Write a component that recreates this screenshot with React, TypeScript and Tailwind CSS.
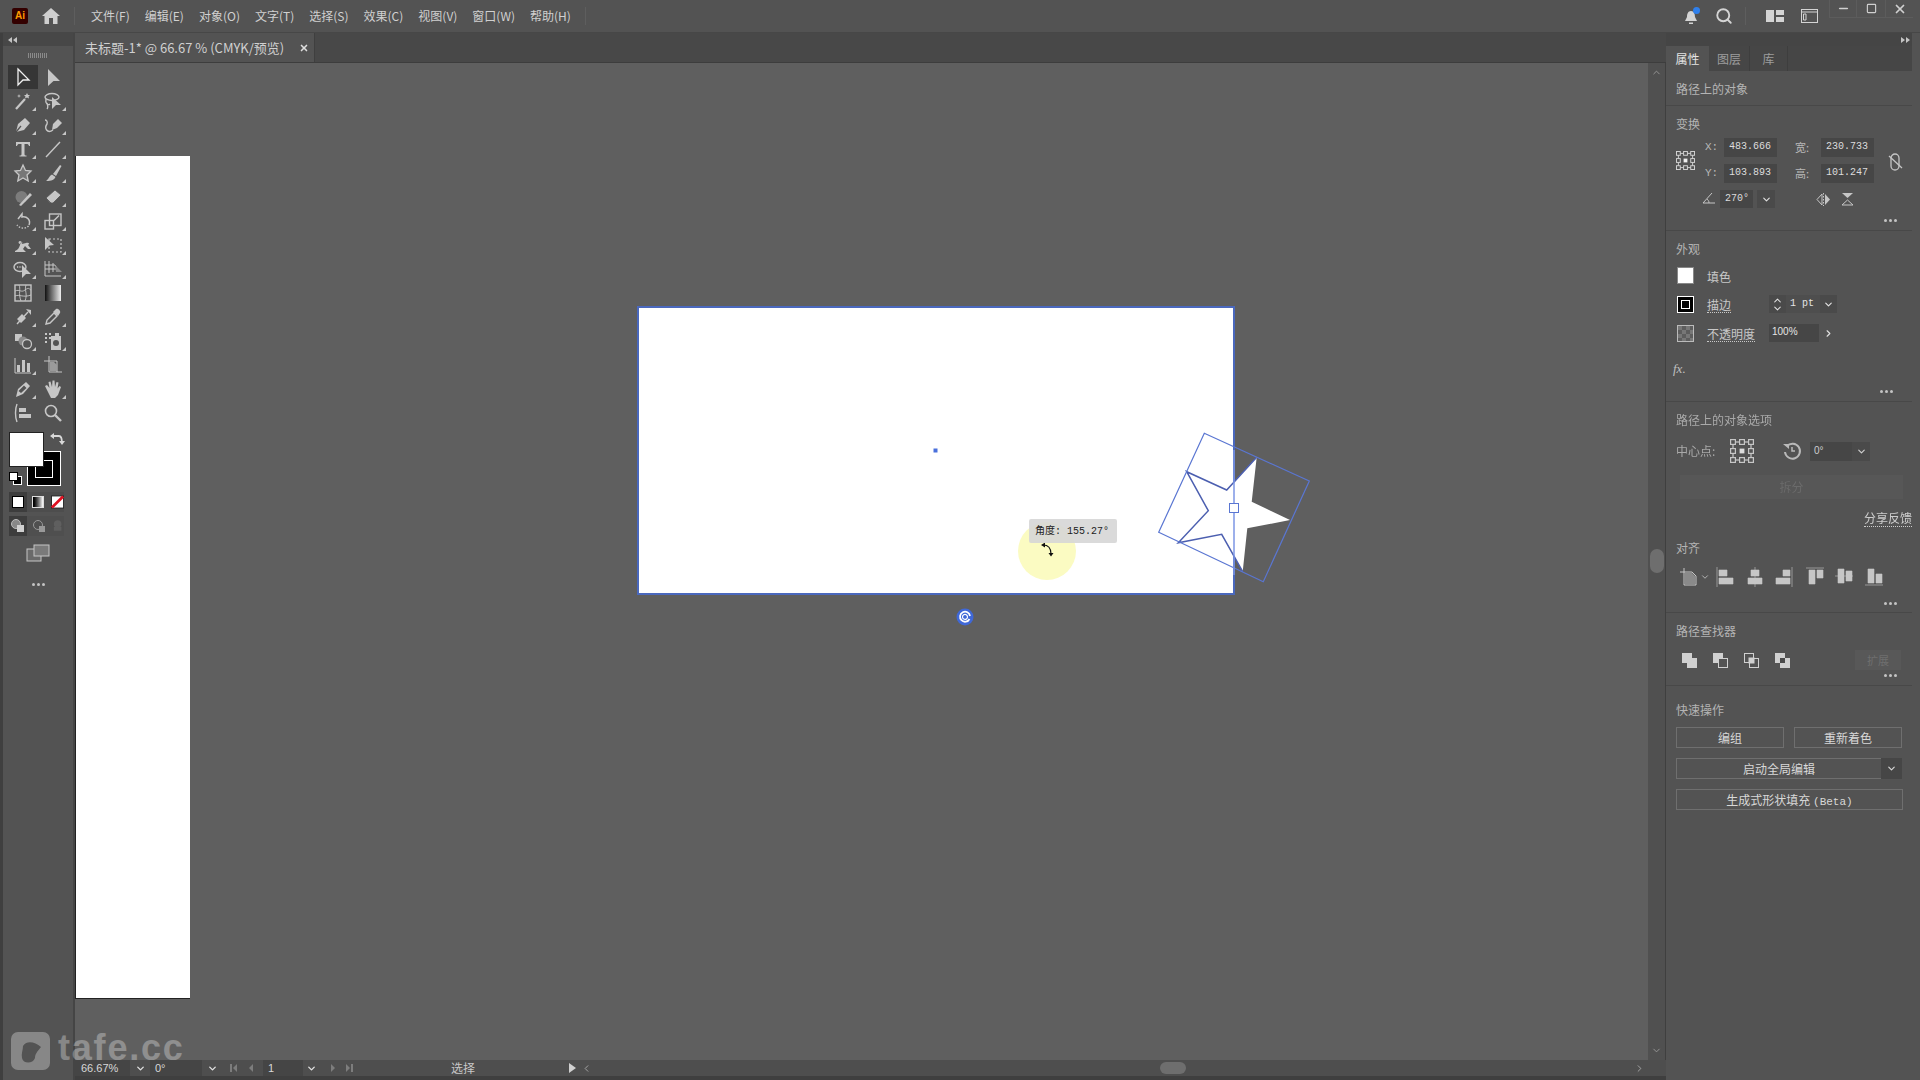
import { ReactNode } from 'react'
import { ChevronDown, ChevronRight, ChevronUp, ChevronLeft, Search, Minus, Square, X } from 'lucide-react'

const MENUS = ['文件(F)', '编辑(E)', '对象(O)', '文字(T)', '选择(S)', '效果(C)', '视图(V)', '窗口(W)', '帮助(H)']
const mono = "font-['Liberation_Mono','Noto_Sans_CJK_SC',monospace]"

// Tool icon, 20x20 grid; the small corner triangle marks a flyout
function Tool({ children, corner = true, active = false }: { children: ReactNode; corner?: boolean; active?: boolean }) {
  return (
    <div className={`relative w-[30px] h-[24px] flex items-center justify-center ${active ? 'bg-[#363636]' : ''}`}>
      <svg width="20" height="20" viewBox="0 0 20 20" fill="#c6c6c6" stroke="#c6c6c6" strokeWidth="0">
        {children}
      </svg>
      {corner && <span className="absolute right-[2px] bottom-[2px] w-0 h-0 border-l-[4px] border-l-transparent border-b-[4px] border-b-[#c6c6c6]" />}
    </div>
  )
}

const line = { fill: 'none', strokeWidth: 1.4 }

const TOOLS: { icon: ReactNode; corner?: boolean; active?: boolean }[] = [
  { icon: <path d="M5 2 L16 13 L10 13 L5 18 Z" fill="none" stroke="#f0f0f0" strokeWidth="1.3" />, corner: false, active: true },
  { icon: <path d="M5 2 L17 14 L10.500 14 L5 19 Z" />, corner: false },
  { icon: <><path d="M3 18 L12 8" {...line} strokeWidth={2.2} /><path d="M14 2 l1 2 2 0 -1.500 1.500 .5 2 -2 -1 -2 1 .5 -2 -1.500 -1.500 2 0z M6 3 l.5 1.500 1.500 .5 -1.500 .5 -.5 1.500 -.5 -1.500 -1.500 -.5 1.500 -.5z" /></> },
  { icon: <><ellipse cx="9" cy="6" rx="7" ry="3.500" {...line} /><path d="M3 8 C2 12 5 15 7 13 M4 12 c1 3 1 5 0 6" {...line} /><path d="M9 6 L18 14 L13 14 L9 18 Z" /></> },
  { icon: <><path d="M3 17 L5 9 L12 3 L17 8 L11 15 Z" /><path d="M3 17 L8 11" stroke="#535353" strokeWidth="1.200" /></> },
  { icon: <><path d="M9 15 L10 9 L15 4 L19 8 L14 13 Z" /><path d="M10 15 C4 19 1 13 4 9 C5 6 3 5 2 5" {...line} /></> },
  { icon: <path d="M3 3 H17 V7 H16 C15.500 5.500 15 5 13.500 5 H11.500 V15 C11.500 16 12 16.500 13.500 16.500 V17.500 H6.500 V16.500 C8 16.500 8.500 16 8.500 15 V5 H6.500 C5 5 4.500 5.500 4 7 H3 Z" />, },
  { icon: <path d="M3 18 L17 3" {...line} /> },
  { icon: <path d="M10 2 L12.500 7.500 L18 8 L14 12 L15.200 18 L10 15 L4.800 18 L6 12 L2 8 L7.500 7.500 Z" fill="#777" stroke="#c6c6c6" strokeWidth="1.300" /> },
  { icon: <><path d="M10 11 L17 2 L18.500 3 L13 13 Z" /><path d="M9 11.500 L12.500 14 C11 18 6 18 3 18 C6 16 6 13 9 11.500Z" /></> },
  { icon: <><circle cx="8.500" cy="10" r="6" fill="#7c7c7c" stroke="#c6c6c6" /><path d="M6 18 L17 6 L19 8 L8 19 Z" /></> },
  { icon: <path d="M3 11 L12 3 L18 8 L10 16 H7 Z M3 11 L8 16" fill="#c6c6c6" stroke="#535353" strokeWidth=".8" /> },
  { icon: <><path d="M5 8 L9 3 V6 C14 5 18 9 16 14" {...line} strokeWidth={1.500} /><path d="M15.500 15 C13 18 7 18 4 14" fill="none" strokeWidth="1.400" strokeDasharray="1.500 1.500" /></> },
  { icon: <><rect x="2" y="9.500" width="8.500" height="8.500" {...line} /><rect x="6.500" y="3" width="11.500" height="11.500" {...line} /><path d="M11 9.500 L16 4.500" {...line} /></> },
  { icon: <path d="M2 16 C5 15 6 13 7 10 C8 6 10 6 9 9 L13 8 C16 7 17 9 15 10 L18 14 L15 14 L12 11 L10 14 L13 17 H2Z M7 6 a1.500 1.500 0 1 0 .1 0" /> },
  { icon: <><path d="M2 2 L11 10 L6.500 10.500 L2 15Z" /><rect x="6" y="4" width="12" height="13" fill="none" strokeWidth="1.200" strokeDasharray="2 2" /></> },
  { icon: <><ellipse cx="7" cy="8" rx="6" ry="4.500" {...line} /><path d="M4 8h6" {...line} strokeDasharray="1.200 1.200" /><path d="M9 6 L18 15 L13 15 L9 19Z" /></> },
  { icon: <><path d="M2 2 V17 H18 M2 6 H12 L16 13 M2 10 H14 M6 2 V14 M10 4 V13" {...line} strokeWidth={1} /><path d="M12 6 L19 13 H13 Z" fill="#8a8a8a" /></> },
  { icon: <><rect x="2" y="2" width="16" height="16" {...line} /><path d="M2 8 C7 6 8 10 12 7 S16 6 18 7 M6 2 C8 6 5 10 8 18 M13 2 C11 8 15 10 12 18 M2 13 C7 11 10 15 18 12" {...line} strokeWidth={.9} /></>, corner: false },
  { icon: <><defs><linearGradient id="grad" x1="0" x2="1"><stop offset="0" stopColor="#111" /><stop offset="1" stopColor="#eee" /></linearGradient></defs><rect x="2" y="2" width="16" height="16" fill="url(#grad)" stroke="#c6c6c6" /></>, corner: false },
  { icon: <><path d="M4 17 L15 5" {...line} /><path d="M4 12 l5 -5 4 4 -5 5z M13 2 l5 1 0 5z" /></> },
  { icon: <><path d="M3 17 L4 13 L11 6 L14 9 L7 16 Z" {...line} /><path d="M10 5 L13 2 C15 1 18 4 17 6 L15 9 Z" /></> },
  { icon: <><rect x="2" y="3" width="7" height="7" /><circle cx="10" cy="10" r="4.500" fill="#8a8a8a" /><circle cx="14" cy="13" r="4.500" fill="#535353" stroke="#c6c6c6" strokeWidth="1.300" /></> },
  { icon: <><path d="M2 2h2v2H2zM6 2h2v2H6zM2 6h2v2H2zM6 6h2v2H6zM2 10h2v2H2z" /><path d="M12 2h4v3h2v14H8V5h4z" /><circle cx="13" cy="12" r="3" fill="#535353" stroke="#c6c6c6" /></> },
  { icon: <><path d="M2 3 V18 H18" {...line} strokeWidth={1} /><path d="M4 10h3v7H4zM9 5h3v12H9zM14 8h3v9h-3z" /></> },
  { icon: <><path d="M6 1 V17 H19 M1 6 H14 V17" {...line} strokeWidth={1} /><path d="M7 7 H11 L14 10 V16 H7Z" fill="#9a9a9a" /></>, corner: false },
  { icon: <path d="M3 18 L5 10 L13 3 L17 7 L10 15 Z M5.500 12 L11 6.500 L13.500 9 L8 14 Z" fillRule="evenodd" /> },
  { icon: <path d="M4 11 L2 7 L4 6 L6.500 9 L5.500 3 L7.500 2.500 L9 8 L9.500 1.500 H11.500 L12 8 L13.500 3 L15.500 3.500 L14.500 9.500 L16.500 7 L18 8 L15 16 L12 19 H8 Z" /> },
  { icon: <><path d="M4 1 C2 6 2 14 4 19" {...line} /><path d="M6 5h7v4H6zM6 11h12v4H6z" /></>, corner: false },
  { icon: <><circle cx="8" cy="8" r="5.500" {...line} strokeWidth={1.600} /><path d="M12 12 L18 18" {...line} strokeWidth={2.400} /></>, corner: false },
]

function Dots({ className = '' }: { className?: string }) {
  return (
    <div className={`flex gap-[2px] ${className}`}>
      <span className="w-[3px] h-[3px] rounded-full bg-[#c4c4c4]" />
      <span className="w-[3px] h-[3px] rounded-full bg-[#c4c4c4]" />
      <span className="w-[3px] h-[3px] rounded-full bg-[#c4c4c4]" />
    </div>
  )
}

// Double arrow on the collapse strips
function Collapse({ flip = false }: { flip?: boolean }) {
  return (
    <svg width="9" height="6" viewBox="0 0 9 6" fill="#c4c4c4">
      {flip ? <path d="M0 0 L4 3 L0 6Z M5 0 L9 3 L5 6Z" /> : <path d="M4 0 L0 3 L4 6Z M9 0 L5 3 L9 6Z" />}
    </svg>
  )
}

function Toolbar() {
  return (
    <aside className="w-[75px] shrink-0 flex flex-col border-l-[3px] border-l-[#3f3f3f] border-r-2 border-r-[#454545]">
      <div className="h-[13px] bg-[#474747] flex items-center pl-[5px]">
        <Collapse />
      </div>
      <div className="h-[19px] flex items-center justify-center">
        <div className="w-[20px] h-[5px] bg-[repeating-linear-gradient(90deg,#8a8a8a_0,#8a8a8a_1px,transparent_1px,transparent_2px)]" />
      </div>
      <div className="grid grid-cols-[30px_30px] pl-[5px]">
        {TOOLS.map((t, i) => (
          <Tool key={i} corner={t.corner} active={t.active}>{t.icon}</Tool>
        ))}
      </div>

      {/* fill and stroke */}
      <div className="relative h-[70px] mt-[0px]">
        <div className="absolute left-[24px] top-[26px] w-[34px] h-[35px] bg-black border border-white flex items-center justify-center">
          <div className="w-[18px] h-[18px] border border-white" />
        </div>
        <div className="absolute left-[6px] top-[7px] w-[35px] h-[35px] bg-white border border-[#222]" />
        <svg className="absolute left-[46px] top-[6px]" width="16" height="16" viewBox="0 0 16 16" fill="none" stroke="#d8d8d8" strokeWidth="1.800">
          <path d="M3 5 H10 C12 5 13 7 13 12" />
          <path d="M1 5 L5 2 V8 Z M10 10 H16 L13 14 Z" fill="#d8d8d8" stroke="none" />
        </svg>
        <div className="absolute left-[6px] top-[47px] w-[9px] h-[9px] bg-white border border-black z-10" />
        <div className="absolute left-[10px] top-[51px] w-[9px] h-[9px] bg-black border border-white" />
      </div>

      <div className="flex items-center h-[20px] mt-[-3px] ml-[6px] mr-[9px] bg-[#4d4d4d]">
        <div className="w-[19px] h-[20px] bg-[#3d3d3d] flex items-center justify-center"><span className="w-[12px] h-[12px] bg-white border border-black" /></div>
        <div className="w-[25px] flex justify-center"><span className="w-[12px] h-[12px] bg-gradient-to-r from-black to-white border border-[#ddd]" /></div>
        <svg width="14" height="14" viewBox="0 0 14 14" className="ml-[1px]">
          <rect x=".5" y=".5" width="13" height="13" fill="#fff" stroke="#222" />
          <path d="M1 13 L13 1" stroke="#e01020" strokeWidth="3" />
        </svg>
      </div>

      <div className="flex items-center h-[20px] mt-[4px] ml-[6px] mr-[9px] bg-[#4f4f4f]">
        <div className="w-[19px] h-[20px] bg-[#3d3d3d] flex items-center justify-center">
          <svg width="14" height="14" viewBox="0 0 14 14"><circle cx="5" cy="5" r="4.500" fill="#888" stroke="#bbb" /><rect x="6" y="6" width="7" height="7" fill="#d0d0d0" /></svg>
        </div>
        <div className="w-[25px] flex justify-center">
          <svg width="14" height="14" viewBox="0 0 14 14"><circle cx="6" cy="6" r="4.500" fill="none" stroke="#999" /><rect x="7" y="7" width="6" height="6" fill="#999" /></svg>
        </div>
        <svg width="14" height="14" viewBox="0 0 14 14" className="opacity-40"><circle cx="7" cy="5" r="4" fill="#777" /><rect x="3" y="8" width="8" height="4" fill="#777" /></svg>
      </div>

      <div className="flex justify-center mt-[8px]">
        <svg width="24" height="18" viewBox="0 0 24 18">
          <rect x="1" y="5" width="14" height="12" fill="#6a6a6a" stroke="#c6c6c6" />
          <rect x="8" y="1" width="15" height="11" fill="#7a7a7a" stroke="#c6c6c6" />
        </svg>
      </div>
      <div className="flex justify-center mt-[21px]"><Dots /></div>
    </aside>
  )
}

// Coordinates are the screen's; the viewBox starts where the canvas does
function StarOverlay() {
  return (
    <svg className="absolute left-0 top-0 pointer-events-none" width="1573" height="997" viewBox="75 63 1573 997">
      <circle cx="1047" cy="551" r="29" fill="#fbfbc2" />
      <path d="M1186.700 471.700 L1226.700 490 L1256.700 457.300 L1251.700 501.700 L1290 520 L1247.300 528.300 L1242.700 571.700 L1221.700 534.300 L1178.300 542.700 L1208.300 510.700 Z" fill="#fff" />
      <path d="M1256.700 457.300 L1226.700 490 L1186.700 471.700 L1208.300 510.700 L1178.300 542.700 L1221.700 534.300 L1242.700 571.700" fill="none" stroke="#4c5fb0" strokeWidth="1.500" />
      <path d="M1204.300 433.300 L1309.300 481 L1263.300 581.700 L1158.700 532.300 Z" fill="none" stroke="#5a76d2" strokeWidth="1.200" />
      <path d="M1234 450 V575" stroke="#7d96e4" strokeWidth="1.500" />
      <rect x="1229.500" y="503.500" width="9" height="9" fill="#fff" stroke="#5a76d2" />
      <path d="M1043 545 C1049 545 1051 548 1051 554" fill="none" stroke="#111" strokeWidth="1.200" />
      <path d="M1041 545 L1045 542.500 V547.500 Z M1048.500 553 H1053.500 L1051 556.500 Z" fill="#111" />
      <rect x="933.500" y="448.500" width="4" height="4" fill="#4a70dc" />
      <circle cx="965" cy="617" r="8.500" fill="#3f68d8" />
      <path d="M969.500 619 A5 5 0 1 1 970 616" fill="none" stroke="#fff" strokeWidth="1.800" />
      <path d="M967.500 617 A2.500 2.500 0 1 1 967.500 616.900" fill="none" stroke="#fff" strokeWidth="1.200" />
    </svg>
  )
}

function Canvas() {
  return (
    <div className="relative flex-1 bg-[#5f5f5f] overflow-hidden">
      <div className="absolute left-0 top-[93px] w-[115px] h-[843px] bg-white border-l border-b border-[#222]" />
      <div className="absolute left-[562px] top-[243px] w-[598px] h-[289px] bg-white border-2 border-[#4a68bd]" />
      <StarOverlay />
      <div className={`absolute left-[954px] top-[456px] w-[88px] h-[24px] rounded-[2px] bg-[#d6d6d6]/90 flex items-center pl-[6px] text-[10px] text-[#222] ${mono}`}>
        角度: 155.27°
      </div>
    </div>
  )
}

function StatusDrop({ className = '' }: { className?: string }) {
  return <ChevronDown size={11} strokeWidth={3} className={`text-[#e0e0e0] shrink-0 ${className}`} />
}

function NavIcon({ d }: { d: string }) {
  return <svg width="12" height="10" viewBox="0 0 12 10" fill="#7d7d7d"><path d={d} /></svg>
}

function StatusBar() {
  return (
    <div className="h-[16px] shrink-0 flex items-center bg-[#4e4e4e] text-[#d8d8d8] text-[11px] leading-none">
      <div className="w-[55px] h-full bg-[#454545] pl-[6px] flex items-center font-['Liberation_Sans',sans-serif]">66.67%</div>
      <div className="w-[20px] flex justify-center"><StatusDrop /></div>
      <div className="w-[52px] h-full bg-[#454545] pl-[5px] flex items-center font-['Liberation_Sans',sans-serif]">0°</div>
      <div className="w-[20px] flex justify-center"><StatusDrop /></div>
      <div className="flex items-center gap-[6px] pl-[5px] w-[41px]">
        <NavIcon d="M3 1h2v8H3z M10 1v8L6 5z" />
        <NavIcon d="M8 1v8L4 5z" />
      </div>
      <div className="w-[40px] h-full bg-[#454545] pl-[5px] flex items-center font-['Liberation_Sans',sans-serif]">1</div>
      <div className="w-[16px] flex justify-center"><StatusDrop /></div>
      <div className="flex items-center gap-[5px] pl-[8px] w-[48px]">
        <NavIcon d="M4 1v8l4-4z" />
        <NavIcon d="M2 1v8l4-4z M7 1h2v8H7z" />
      </div>
      <div className="w-[192px] text-center text-[12px] text-[#c8c8c8]">选择</div>
      <svg className="ml-[8px] w-[14px] shrink-0" width="14" height="10" viewBox="0 0 14 10" fill="#d0d0d0"><path d="M2 0 L9 5 L2 10Z" /></svg>
      <ChevronLeft size={11} className="text-[#aaa] shrink-0" />
      <div className="flex-1 relative h-full">
        <div className="absolute left-[568px] top-[2px] w-[26px] h-[12px] rounded-full bg-[#6e6e6e]" />
      </div>
      <ChevronRight size={11} className="text-[#aaa] shrink-0 mr-[21px]" />
    </div>
  )
}

function Label({ children, underline = false }: { children: ReactNode; underline?: boolean }) {
  return <span className={`inline-block text-[12px] leading-[15px] text-[#c8c8c8] ${underline ? 'border-b border-dotted border-[#c8c8c8]' : ''}`}>{children}</span>
}

function Title({ children }: { children: ReactNode }) {
  return <div className="text-[12px] leading-[18px] text-[#b4b4b4] pl-[10px]">{children}</div>
}

function Field({ value, className = '' }: { value: string; className?: string }) {
  return <div className={`h-[19px] bg-[#464646] text-[#dcdcdc] text-[10px] leading-[17px] pl-[5px] ${mono} ${className}`}>{value}</div>
}

function RefPoint({ size = 19 }: { size?: number }) {
  const pts = [2.500, 10, 17.500]
  return (
    <svg width={size} height={size} viewBox="0 0 20 20" fill="#535353" stroke="#d4d4d4" strokeWidth="1">
      <rect x="2.500" y="2.500" width="15" height="15" fill="none" />
      {pts.map(y => pts.map(x => (
        x === 10 && y === 10
          ? <rect key={`${x}${y}`} x={x - 2} y={y - 2} width="4" height="4" fill="#eee" stroke="none" />
          : <rect key={`${x}${y}`} x={x - 2} y={y - 2} width="4" height="4" />
      )))}
    </svg>
  )
}

const alignIcons = [
  'M1 1 V21 M3 4 H11 V10 H3 Z M3 12 H17 V18 H3 Z',
  'M9 1 V21 M5 4 H13 V10 H5 Z M2 12 H16 V18 H2 Z',
  'M17 1 V21 M8 4 H15 V10 H8 Z M1 12 H15 V18 H1 Z',
  'M1 2 H19 M4 4 H10 V18 H4 Z M12 4 H18 V12 H12 Z',
  'M1 10 H19 M4 3 H10 V17 H4 Z M12 5 H18 V15 H12 Z',
  'M1 19 H19 M4 3 H10 V17 H4 Z M12 8 H18 V17 H12 Z',
]

function AlignRow() {
  return (
    <div className="flex items-center h-[22px] mt-[9px] pl-[14px]">
      <svg width="20" height="18" viewBox="0 0 20 18" fill="none" stroke="#c6c6c6">
        <path d="M4 0 V4 M0 4 H12 L16 8 V17 H4 V4" />
        <path d="M5 5 H12 L15 8 V16 H5Z" fill="#8a8a8a" stroke="none" />
      </svg>
      <ChevronDown size={10} className="text-[#c6c6c6]" />
      <div className="flex gap-[9.500px] ml-[6px]">
        {alignIcons.map((d, i) => (
          <svg key={i} width="20" height="22" viewBox="0 0 20 22">
            <path d={d} fill="#c6c6c6" stroke="#c6c6c6" strokeWidth=".6" />
          </svg>
        ))}
      </div>
    </div>
  )
}

function PathfinderRow() {
  return (
    <div className="flex items-center h-[20px] mt-[10px] pl-[16px]">
      <div className="flex gap-[16px]">
        <svg width="15" height="15" viewBox="0 0 15 15"><rect width="10" height="10" fill="#d0d0d0" /><rect x="5" y="5" width="10" height="10" fill="#d0d0d0" /></svg>
        <svg width="15" height="15" viewBox="0 0 15 15"><rect width="10" height="10" fill="#d0d0d0" /><rect x="5.500" y="5.500" width="9" height="9" fill="#535353" stroke="#d0d0d0" /></svg>
        <svg width="15" height="15" viewBox="0 0 15 15" fill="none" stroke="#d0d0d0"><rect x=".5" y=".5" width="9" height="9" /><rect x="5.500" y="5.500" width="9" height="9" /><rect x="5" y="5" width="5" height="5" fill="#d0d0d0" /></svg>
        <svg width="15" height="15" viewBox="0 0 15 15"><rect width="10" height="10" fill="#d0d0d0" /><rect x="5" y="5" width="10" height="10" fill="#d0d0d0" /><rect x="5" y="5" width="5" height="5" fill="#4a4a4a" /></svg>
      </div>
      <div className="ml-[65px] w-[46px] h-[20px] bg-[#585858] text-[11px] leading-[20px] text-center text-[#6f6f6f]">扩展</div>
    </div>
  )
}

function QuickBtn({ children, className = '' }: { children: ReactNode; className?: string }) {
  return (
    <div className={`h-[21px] border border-[#6f6f6f] text-[12px] leading-[19px] text-center text-[#d8d8d8] ${className}`}>{children}</div>
  )
}

function RightPanel() {
  return (
    <aside className="w-[254px] shrink-0 flex flex-col">
      <div className="h-[13px] bg-[#454545] flex justify-end items-center pr-[2px] mr-[8px]">
        <Collapse flip />
      </div>
      <div className="h-[25px] flex bg-[#464646] text-[12px] text-[#9d9d9d] mr-[8px]">
        <div className="w-[43px] bg-[#535353] text-center leading-[25px] text-[#e4e4e4]">属性</div>
        <div className="w-[41px] text-center leading-[25px] border-r border-[#3e3e3e]">图层</div>
        <div className="w-[38px] text-center leading-[25px] border-r border-[#3e3e3e]">库</div>
      </div>

      <div className="mr-[8px] text-[#c8c8c8]">
        <div className="h-[35px] border-b border-[#484848] pt-[9px]">
          <Title>路径上的对象</Title>
        </div>

        {/* 变换 */}
        <section className="h-[125px] border-b border-[#484848] pt-[9px] relative">
          <Title>变换</Title>
          <div className="flex items-start mt-[5px] pl-[10px]">
            <div className="mt-[13px]"><RefPoint /></div>
            <div className="ml-[10px] grid grid-cols-[19px_53px_44px_53px] gap-y-[7px] text-[11px] leading-[19px] text-[#b8b8b8]">
              <span className={mono}>X:</span><Field value="483.666" />
              <span className="pl-[18px]">宽:</span><Field value="230.733" />
              <span className={mono}>Y:</span><Field value="103.893" />
              <span className="pl-[18px]">高:</span><Field value="101.247" />
            </div>
            <svg className="ml-[14px] mt-[15px]" width="15" height="18" viewBox="0 0 15 18" fill="none" stroke="#c6c6c6" strokeWidth="1.300">
              <rect x="3" y="1" width="8" height="16" rx="4" />
              <path d="M1 3 L14 15" />
            </svg>
          </div>
          <div className="flex items-center mt-[7px] pl-[36px] h-[18px]">
            <svg className="-mt-[3px]" width="14" height="12" viewBox="0 0 14 12" fill="none" stroke="#c6c6c6"><path d="M13 11 H1 L10 1" /><path d="M7 11 C7 9 6 8 5 7" /></svg>
            <Field value="270°" className="ml-[4px] w-[33px] !h-[18px]" />
            <div className="ml-[4px] w-[18px] h-[18px] bg-[#4a4a4a] flex justify-center items-center"><ChevronDown size={11} strokeWidth={2.500} className="text-[#e0e0e0]" /></div>
            <svg className="ml-[41px]" width="15" height="13" viewBox="0 0 15 13" fill="#c6c6c6"><path d="M6 1 V12 L1 6.500Z" fill="none" stroke="#c6c6c6" /><path d="M9 1 V12 L14 6.500Z" /><path d="M7.500 0 V13" stroke="#c6c6c6" strokeDasharray="1.500 1.500" /></svg>
            <svg className="ml-[10px]" width="13" height="14" viewBox="0 0 13 14" fill="#c6c6c6"><path d="M1 1 H12 L6.500 6Z" /><path d="M1 13 H12 L6.500 8Z" fill="none" stroke="#c6c6c6" /></svg>
          </div>
          <Dots className="absolute right-[15px] bottom-[8px]" />
        </section>

        {/* 外观 */}
        <section className="h-[171px] border-b border-[#484848] pt-[9px] relative">
          <Title>外观</Title>
          <div className="flex items-center h-[17px] mt-[9px] pl-[11px]">
            <div className="w-[17px] h-[17px] bg-white border border-[#888]" />
            <span className="ml-[13px] leading-[15px]"><Label>填色</Label></span>
          </div>
          <div className="flex items-center h-[18px] mt-[11px] pl-[11px]">
            <div className="w-[17px] h-[17px] bg-black border border-white flex items-center justify-center"><span className="w-[9px] h-[9px] border border-white" /></div>
            <span className="ml-[13px] w-[62px] leading-[16px]"><Label underline>描边</Label></span>
            <div className={`w-[68px] h-[18px] flex items-center bg-[#4a4a4a] text-[10px] text-[#e4e4e4] ${mono}`}>
              <div className="w-[17px] flex flex-col items-center">
                <ChevronUp size={11} strokeWidth={2.200} className="-mb-[3px]" />
                <ChevronDown size={11} strokeWidth={2.200} />
              </div>
              <span className="w-[34px] pl-[4px] bg-[#4e4e4e] leading-[18px]">1 pt</span>
              <ChevronDown size={11} strokeWidth={2.500} className="ml-[3px]" />
            </div>
          </div>
          <div className="flex items-center h-[18px] mt-[11px] pl-[11px]">
            <div className="w-[17px] h-[17px] border border-[#bbb] bg-[conic-gradient(#5d5d5d_25%,#777_0_50%,#5d5d5d_0_75%,#777_0)] bg-[length:8px_8px]" />
            <span className="ml-[13px] w-[62px] leading-[16px]"><Label underline>不透明度</Label></span>
            <div className={`w-[50px] h-[18px] bg-[#464646] text-[10px] leading-[16px] pl-[3px] text-[#e4e4e4] font-['Liberation_Sans',sans-serif]`}>100%</div>
            <div className="w-[18px] flex justify-center"><ChevronRight size={11} strokeWidth={2.500} className="text-[#e0e0e0]" /></div>
          </div>
          <div className="mt-[18px] pl-[7px] text-[13px] leading-[18px] italic text-[#c0c0c0] font-['Liberation_Serif',serif]">fx.</div>
          <Dots className="absolute right-[19px] bottom-[8px]" />
        </section>

        {/* 路径上的对象选项 */}
        <section className="h-[130px] pt-[9px] opacity-90">
          <Title>路径上的对象选项</Title>
          <div className="flex items-center h-[24px] mt-[10px] pl-[10px]">
            <span className="text-[12px] text-[#b4b4b4] w-[54px]">中心点:</span>
            <RefPoint size={24} />
            <svg className="ml-[28px]" width="20" height="20" viewBox="0 0 20 20" fill="none" stroke="#c6c6c6" strokeWidth="2">
              <path d="M5 5 A7.500 7.500 0 1 1 3 11" />
              <path d="M1 3 H7 V8 Z" fill="#c6c6c6" stroke="none" />
              <path d="M10 6 V10 H13" strokeWidth="1.500" />
            </svg>
            <div className={`ml-[8px] w-[42px] h-[19px] bg-[#464646] text-[10px] leading-[17px] pl-[4px] text-[#dcdcdc] font-['Liberation_Sans',sans-serif]`}>0°</div>
            <div className="w-[18px] h-[19px] bg-[#4a4a4a] flex justify-center items-center"><ChevronDown size={11} strokeWidth={2.500} className="text-[#e0e0e0]" /></div>
          </div>
          <div className="ml-[14px] w-[223px] h-[24px] mt-[12px] bg-[#585858] text-center text-[12px] leading-[24px] text-[#6f6f6f]">拆分</div>
          <div className="flex justify-end mt-[11px]">
            <span className="text-[12px] leading-[16px] text-[#dcdcdc] border-b border-dotted border-[#dcdcdc]">分享反馈</span>
          </div>
        </section>

        {/* 对齐 */}
        <section className="h-[81px] border-b border-[#484848] pt-[7px] relative">
          <Title>对齐</Title>
          <AlignRow />
          <Dots className="absolute right-[15px] bottom-[7px]" />
        </section>

        {/* 路径查找器 */}
        <section className="h-[73px] border-b border-[#484848] pt-[9px] relative">
          <Title>路径查找器</Title>
          <PathfinderRow />
          <Dots className="absolute right-[15px] bottom-[8px]" />
        </section>

        {/* 快速操作 */}
        <section className="pt-[15px] pl-[10px] pr-[9px]">
          <div className="text-[12px] leading-[18px] text-[#b4b4b4]">快速操作</div>
          <div className="flex gap-[10px] mt-[8px]">
            <QuickBtn className="w-[108px]">编组</QuickBtn>
            <QuickBtn className="w-[108px]">重新着色</QuickBtn>
          </div>
          <div className="flex mt-[10px]">
            <QuickBtn className="w-[205px] !border-r-0">启动全局编辑</QuickBtn>
            <div className="w-[21px] h-[21px] bg-[#464646] flex items-center justify-center"><ChevronDown size={11} strokeWidth={2.500} className="text-[#d8d8d8]" /></div>
          </div>
          <QuickBtn className="mt-[10px]">
            生成式形状填充 <span className={`${mono} text-[11px]`}>(Beta)</span>
          </QuickBtn>
        </section>
      </div>
    </aside>
  )
}

export default function App() {
  return (
    <div className="relative w-[1920px] h-[1080px] overflow-hidden flex flex-col bg-[#535353] font-['Noto_Sans_CJK_SC',sans-serif]">
      {/* menu bar */}
      <header className="h-[33px] shrink-0 flex items-center border-b border-[#474747]">
        <div className="ml-[12px] w-[16px] h-[16px] bg-[#330000] rounded-[2px] flex items-center justify-center text-[10px] leading-none font-bold text-[#ff9a00] font-['Liberation_Sans',sans-serif]">Ai</div>
        <svg className="ml-[14px]" width="18" height="18" viewBox="0 0 18 18" fill="#cfcfcf">
          <path d="M9 1 L18 9 H15.500 V17 H11 V11 H7 V17 H2.500 V9 H0 Z" />
        </svg>
        <div className="ml-[14px] w-px h-[18px] bg-[#5e5e5e]" />
        <nav className="ml-[16px] flex gap-[15px] text-[12px] text-[#d0d0d0]">
          {MENUS.map(m => <span key={m}>{m}</span>)}
        </nav>
        <div className="ml-[14px] w-px h-[18px] bg-[#5e5e5e]" />
        <div className="flex-1" />
        <div className="relative w-[18px] h-[18px] flex items-end justify-center">
          <svg width="16" height="16" viewBox="0 0 16 16" fill="#d4d4d4"><path d="M8 2 C11 2 12 5 12 8 L14 12 H2 L4 8 C4 5 5 2 8 2Z M6 13.500 H10 V15 H6Z" /></svg>
          <span className="absolute right-[0px] top-[0px] w-[7px] h-[7px] rounded-full bg-[#2f80ed]" />
        </div>
        <Search size={18} strokeWidth={2.500} className="ml-[15px] text-[#d4d4d4]" />
        <div className="ml-[12px] w-px h-[18px] bg-[#5e5e5e]" />
        <svg className="ml-[20px]" width="18" height="12" viewBox="0 0 18 12" fill="#d4d4d4">
          <path d="M0 0H8V12H0ZM10 0H18V5H10ZM10 7H18V12H10Z" />
        </svg>
        <svg className="ml-[17px]" width="17" height="14" viewBox="0 0 17 14" fill="none" stroke="#d4d4d4">
          <rect x=".5" y=".5" width="16" height="13" />
          <path d="M.5 3 H16.500 M2.500 5 H5 V11 H2.500 Z" />
        </svg>
        <div className="ml-[11px] self-start h-[18px] flex text-[#d0d0d0] mr-[7px]">
          <div className="w-[27px] flex justify-center items-center border-l border-b border-[#5c5c5c]"><Minus size={13} strokeWidth={3} /></div>
          <div className="w-[29px] flex justify-center items-center border-l border-b border-[#5c5c5c]"><Square size={11} strokeWidth={2.500} /></div>
          <div className="w-[28px] flex justify-center items-center border-l border-b border-[#5c5c5c]"><X size={14} strokeWidth={3} /></div>
        </div>
      </header>

      <div className="flex-1 flex min-h-0">
        <Toolbar />
        <main className="flex-1 min-w-0 flex flex-col">
          {/* document tab */}
          <div className="h-[30px] shrink-0 flex bg-[#484848] border-b border-[#3d3d3d]">
            <div className="w-[240px] flex items-center justify-between pl-[10px] pr-[5px] bg-[#535353] border-r border-[#3f3f3f] text-[13px] text-[#d0d0d0]">
              <span>未标题-1* @ 66.67 % (CMYK/预览)</span>
              <X size={10} strokeWidth={4} className="text-[#dedede]" />
            </div>
          </div>
          <div className="flex-1 flex min-h-0">
            <Canvas />
            <div className="w-[18px] shrink-0 bg-[#505050] border-r border-[#3f3f3f] relative flex flex-col items-center justify-between py-[4px]">
              <ChevronUp size={11} className="text-[#999]" />
              <div className="absolute left-[2px] top-[486px] w-[14px] h-[24px] rounded-full bg-[#6e6e6e]" />
              <ChevronDown size={11} className="text-[#999]" />
            </div>
          </div>
          <StatusBar />
          <div className="h-[4px] shrink-0 bg-[#3f3f3f]" />
        </main>
        <RightPanel />
      </div>

      {/* watermark */}
      <div className="absolute left-[11px] top-[1032px] flex items-start gap-[8px] opacity-30 pointer-events-none">
        <svg width="39" height="38" viewBox="0 0 39 38">
          <path fillRule="evenodd" fill="#fff" d="M7 0 H32 A7 7 0 0 1 39 7 V31 A7 7 0 0 1 32 38 H7 A7 7 0 0 1 0 31 V7 A7 7 0 0 1 7 0 Z M12 14 C16 8 24 10 30 15 C26 20 24 22 24 26 C22 32 12 32 11 26 C10 22 12 18 12 14 Z" />
        </svg>
        <span className="mt-[3px] text-[36px] leading-[26px] font-bold text-white font-['Liberation_Sans',sans-serif] tracking-[1.800px]">tafe.cc</span>
      </div>
    </div>
  )
}
